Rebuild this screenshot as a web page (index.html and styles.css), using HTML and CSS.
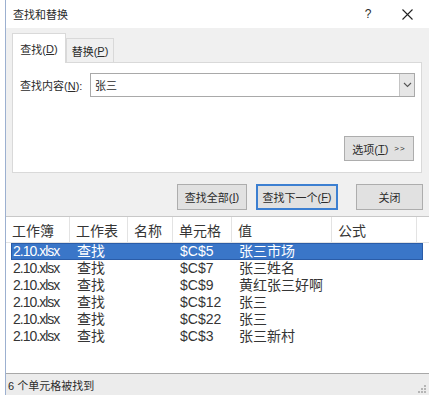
FILE: index.html
```html
<!DOCTYPE html>
<html lang="zh-CN">
<head>
    <meta charset="UTF-8">
    <title>查找和替换</title>
    <link rel="stylesheet" href="styles.css">
</head>
<body>
    <div class="window">
        <div class="titlebar">
            <span class="title">查找和替换</span>
            <span class="help">?</span>
            <span class="close">
                <svg width="11" height="11" viewBox="0 0 11 11"><path d="M0.5 0.5L10.5 10.5M10.5 0.5L0.5 10.5" stroke="#222" stroke-width="1.1" fill="none"/></svg>
            </span>
        </div>

        <div class="dialog">
            <div class="tabs">
                <div class="tab active">查找(<u>D</u>)</div>
                <div class="tab">替换(<u>P</u>)</div>
            </div>
            <div class="panel">
                <div class="find-row">
                    <label class="find-label">查找内容(<u>N</u>):</label>
                    <div class="combo">
                        <span class="combo-text">张三</span>
                        <span class="combo-drop">
                            <svg width="9" height="6" viewBox="0 0 9 6"><path d="M1 1L4.5 4.5L8 1" stroke="#555" stroke-width="1.1" fill="none"/></svg>
                        </span>
                    </div>
                </div>
                <div class="options-row">
                    <button class="btn btn-options">选项(<u>T</u>) <span class="arrows">&gt;&gt;</span></button>
                </div>
            </div>
            <div class="actions">
                <button class="btn btn-all">查找全部(<u>I</u>)</button>
                <button class="btn btn-next">查找下一个(<u>F</u>)</button>
                <button class="btn btn-close">关闭</button>
            </div>
        </div>

        <div class="results">
            <div class="result-head">
                <div class="cell">工作簿</div>
                <div class="cell">工作表</div>
                <div class="cell">名称</div>
                <div class="cell">单元格</div>
                <div class="cell">值</div>
                <div class="cell">公式</div>
            </div>
            <div class="result-row selected">
                <div class="cell file">2.10.xlsx</div><div class="cell">查找</div><div class="cell"></div><div class="cell">$C$5</div><div class="cell">张三市场</div><div class="cell"></div>
            </div>
            <div class="result-row">
                <div class="cell file">2.10.xlsx</div><div class="cell">查找</div><div class="cell"></div><div class="cell">$C$7</div><div class="cell">张三姓名</div><div class="cell"></div>
            </div>
            <div class="result-row">
                <div class="cell file">2.10.xlsx</div><div class="cell">查找</div><div class="cell"></div><div class="cell">$C$9</div><div class="cell">黄红张三好啊</div><div class="cell"></div>
            </div>
            <div class="result-row">
                <div class="cell file">2.10.xlsx</div><div class="cell">查找</div><div class="cell"></div><div class="cell">$C$12</div><div class="cell">张三</div><div class="cell"></div>
            </div>
            <div class="result-row">
                <div class="cell file">2.10.xlsx</div><div class="cell">查找</div><div class="cell"></div><div class="cell">$C$22</div><div class="cell">张三</div><div class="cell"></div>
            </div>
            <div class="result-row">
                <div class="cell file">2.10.xlsx</div><div class="cell">查找</div><div class="cell"></div><div class="cell">$C$3</div><div class="cell">张三新村</div><div class="cell"></div>
            </div>
        </div>

        <div class="statusbar">
            <span class="status-text">6 个单元格被找到</span>
            <svg class="grip" width="8" height="8" viewBox="0 0 8 8">
                <rect x="6" y="0" width="2" height="2" fill="#b5b5b5"/>
                <rect x="3" y="3" width="2" height="2" fill="#b5b5b5"/>
                <rect x="6" y="3" width="2" height="2" fill="#b5b5b5"/>
                <rect x="0" y="6" width="2" height="2" fill="#b5b5b5"/>
                <rect x="3" y="6" width="2" height="2" fill="#b5b5b5"/>
                <rect x="6" y="6" width="2" height="2" fill="#b5b5b5"/>
            </svg>
        </div>
    </div>
</body>
</html>
```

FILE: styles.css
```css
* {
    margin: 0;
    padding: 0;
    box-sizing: border-box;
}

body {
    font-family: "Liberation Sans", "Noto Sans CJK SC", sans-serif;
    font-size: 11px;
    color: #2b2b2b;
    background: #fff;
    width: 429px;
    height: 395px;
    overflow: hidden;
}

u {
    text-decoration: underline;
    text-underline-offset: 1px;
}

.window {
    margin-left: 5px;
    border-left: 1px solid #9cb0d0;
    height: 395px;
    display: flex;
    flex-direction: column;
}

/* title bar */
.titlebar {
    height: 28px;
    background: #fff;
    display: flex;
    align-items: center;
    padding-left: 7px;
}

.title {
    flex: 1;
}

.help {
    width: 12px;
    text-align: center;
    font-size: 12px;
    margin-right: 28px;
}

.close {
    display: flex;
    align-items: center;
    margin-right: 16px;
}

/* upper dialog area */
.dialog {
    background: #f0f0f0;
    padding: 5px 6px 6px 6px;
}

.tabs {
    display: flex;
    align-items: flex-end;
    height: 29px;
    position: relative;
    z-index: 1;
}

.tab {
    height: 24px;
    width: 48px;
    white-space: nowrap;
    display: flex;
    align-items: center;
    justify-content: center;
    background: #f0f0f0;
    border: 1px solid #d9d9d9;
    border-bottom: none;
}

.tab.active {
    width: 54px;
    height: 30px;
    margin-bottom: -1px;
    background: #fff;
    padding-top: 1px;
}

.panel {
    width: 410px;
    height: 111px;
    background: #fff;
    border: 1px solid #d9d9d9;
    padding: 10px 6px 11px 7px;
    display: flex;
    flex-direction: column;
    justify-content: space-between;
}

.find-row {
    display: flex;
    align-items: center;
}

.find-label {
    width: 70px;
}

.combo {
    flex: 1;
    height: 24px;
    border: 1px solid #a9a9a9;
    display: flex;
    align-items: stretch;
}

.combo-text {
    flex: 1;
    display: flex;
    align-items: center;
    padding-left: 4px;
}

.combo-drop {
    width: 15px;
    background: #e6e6e6;
    border-left: 1px solid #c4c4c4;
    display: flex;
    align-items: center;
    justify-content: center;
}

.options-row {
    display: flex;
    justify-content: flex-end;
    padding-right: 1px;
}

.btn {
    font-family: "Liberation Sans", "Noto Sans CJK SC", sans-serif;
    font-size: 11px;
    color: #2b2b2b;
    background: #e1e1e1;
    border: 1px solid #adadad;
    height: 26px;
    white-space: nowrap;
    display: flex;
    align-items: center;
    justify-content: center;
}

.btn-options {
    width: 70px;
    height: 25px;
}

.arrows {
    font-size: 8px;
    margin-left: 6px;
    letter-spacing: 1px;
}

.actions {
    display: flex;
    justify-content: flex-end;
    margin-top: 11px;
    margin-right: -6px;
    padding-right: 6px;
}

.btn-all {
    width: 70px;
}

.btn-next {
    width: 82px;
    margin-left: 9px;
    border: 2px solid #3c7fd1;
}

.btn-close {
    width: 67px;
    margin-left: 18px;
}

/* results list */
.results {
    flex: 1;
    background: #fff;
    border-top: 1px solid #c8c8c8;
    font-size: 14px;
    color: #353535;
}

.result-head,
.result-row {
    display: grid;
    grid-template-columns: 64px 58px 45px 59px 100px 85px;
}

.result-head {
    height: 26px;
    align-items: center;
    border-bottom: 1px solid #e3e3e3;
}

.result-head .cell {
    padding-left: 6px;
    height: 100%;
    display: flex;
    align-items: center;
    border-right: 1px solid #e3e3e3;
}

.result-row {
    height: 17px;
    align-items: center;
    line-height: 17px;
}

.result-row .cell {
    padding-left: 7px;
    white-space: nowrap;
}

.result-row .file {
    letter-spacing: -1px;
}

.result-row.selected {
    margin-left: 5px;
    margin-right: 6px;
    grid-template-columns: 59px 58px 45px 59px 100px 80px;
    background: #3a76c8;
    color: #fff;
    box-shadow: inset 0 0 0 1px #2a5ca8;
}

.result-row.selected .file {
    padding-left: 2px;
}

/* status bar */
.statusbar {
    height: 22px;
    background: #ececec;
    border-top: 1px solid #a8a8a8;
    display: flex;
    align-items: center;
    justify-content: space-between;
    padding: 0 3px 0 2px;
}

.grip {
    align-self: flex-end;
    margin-bottom: 2px;
}
```
